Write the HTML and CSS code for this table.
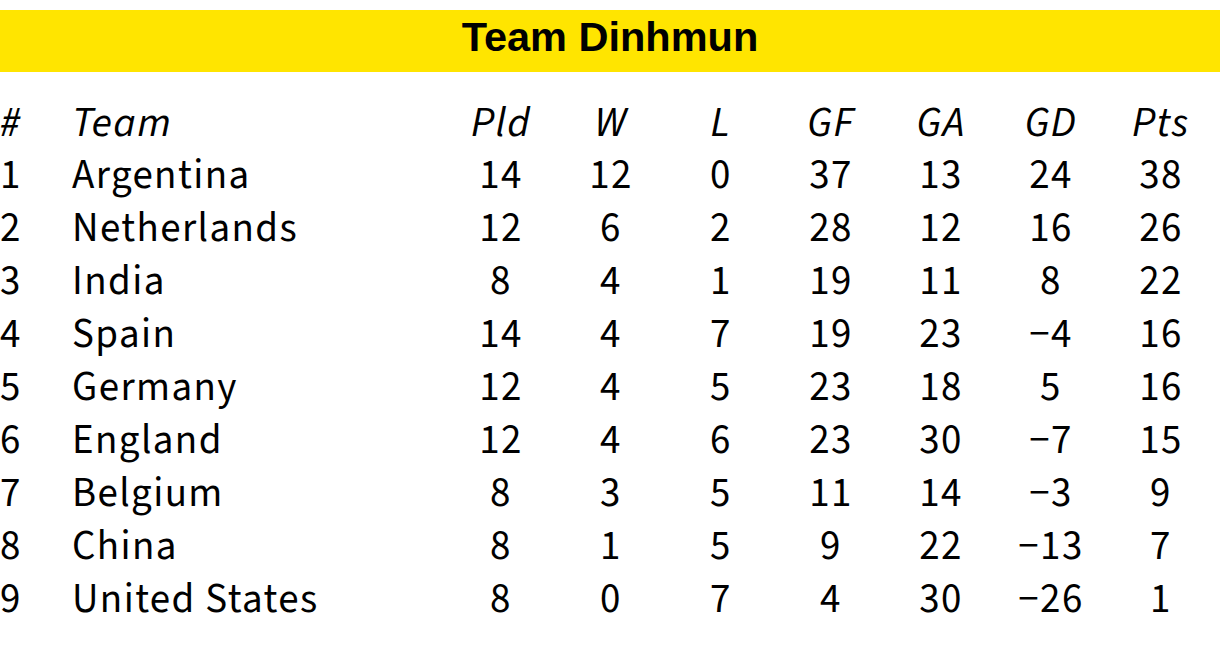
FILE: index.html
```html
<!DOCTYPE html>
<html lang="en">
<head>
<meta charset="utf-8">
<title>Team Dinhmun</title>
<link rel="stylesheet" href="styles.css">
</head>
<body>
<div class="banner"><h1 class="title">Team Dinhmun</h1></div>
<div class="standings">
  <div class="row head">
    <span class="c-pos">#</span><span class="c-team">Team</span>
    <span class="num">Pld</span><span class="num">W</span><span class="num">L</span>
    <span class="num">GF</span><span class="num">GA</span><span class="num">GD</span><span class="num">Pts</span>
  </div>
  <div class="row"><span class="c-pos">1</span><span class="c-team">Argentina</span><span class="num">14</span><span class="num">12</span><span class="num">0</span><span class="num">37</span><span class="num">13</span><span class="num">24</span><span class="num">38</span></div>
  <div class="row"><span class="c-pos">2</span><span class="c-team">Netherlands</span><span class="num">12</span><span class="num">6</span><span class="num">2</span><span class="num">28</span><span class="num">12</span><span class="num">16</span><span class="num">26</span></div>
  <div class="row"><span class="c-pos">3</span><span class="c-team">India</span><span class="num">8</span><span class="num">4</span><span class="num">1</span><span class="num">19</span><span class="num">11</span><span class="num">8</span><span class="num">22</span></div>
  <div class="row"><span class="c-pos">4</span><span class="c-team">Spain</span><span class="num">14</span><span class="num">4</span><span class="num">7</span><span class="num">19</span><span class="num">23</span><span class="num">−4</span><span class="num">16</span></div>
  <div class="row"><span class="c-pos">5</span><span class="c-team">Germany</span><span class="num">12</span><span class="num">4</span><span class="num">5</span><span class="num">23</span><span class="num">18</span><span class="num">5</span><span class="num">16</span></div>
  <div class="row"><span class="c-pos">6</span><span class="c-team">England</span><span class="num">12</span><span class="num">4</span><span class="num">6</span><span class="num">23</span><span class="num">30</span><span class="num">−7</span><span class="num">15</span></div>
  <div class="row"><span class="c-pos">7</span><span class="c-team">Belgium</span><span class="num">8</span><span class="num">3</span><span class="num">5</span><span class="num">11</span><span class="num">14</span><span class="num">−3</span><span class="num">9</span></div>
  <div class="row"><span class="c-pos">8</span><span class="c-team">China</span><span class="num">8</span><span class="num">1</span><span class="num">5</span><span class="num">9</span><span class="num">22</span><span class="num">−13</span><span class="num">7</span></div>
  <div class="row"><span class="c-pos">9</span><span class="c-team">United States</span><span class="num">8</span><span class="num">0</span><span class="num">7</span><span class="num">4</span><span class="num">30</span><span class="num">−26</span><span class="num">1</span></div>
</div>
</body>
</html>
```
FILE: styles.css
```css
html, body {
  margin: 0;
  padding: 0;
  background: #ffffff;
  color: #000000;
}
body {
  font-family: "Source Sans Pro", "Source Sans 3", Lato, "Noto Sans", sans-serif;
}
.banner {
  margin-top: 10px;
  height: 62px;
  box-sizing: border-box;
  padding-bottom: 8px;
  background: #ffe500;
  display: flex;
  align-items: center;
  justify-content: center;
}
.title {
  margin: 0;
  font-family: "Liberation Sans", Arial, sans-serif;
  font-weight: bold;
  font-size: 41.5px;
  letter-spacing: 0;
  line-height: 1;
}
.standings {
  margin-top: 24px;
}
.row {
  display: grid;
  grid-template-columns: 72px 374px repeat(7, 110px);
  height: 53px;
  align-items: center;
  font-size: 41px;
  letter-spacing: 1.4px;
  line-height: 1;
}
.c-pos {
  text-align: left;
}
.c-team {
  text-align: left;
  white-space: nowrap;
}
.num {
  text-align: center;
}
.head {
  font-style: italic;
  font-size: 42px;
}
```
